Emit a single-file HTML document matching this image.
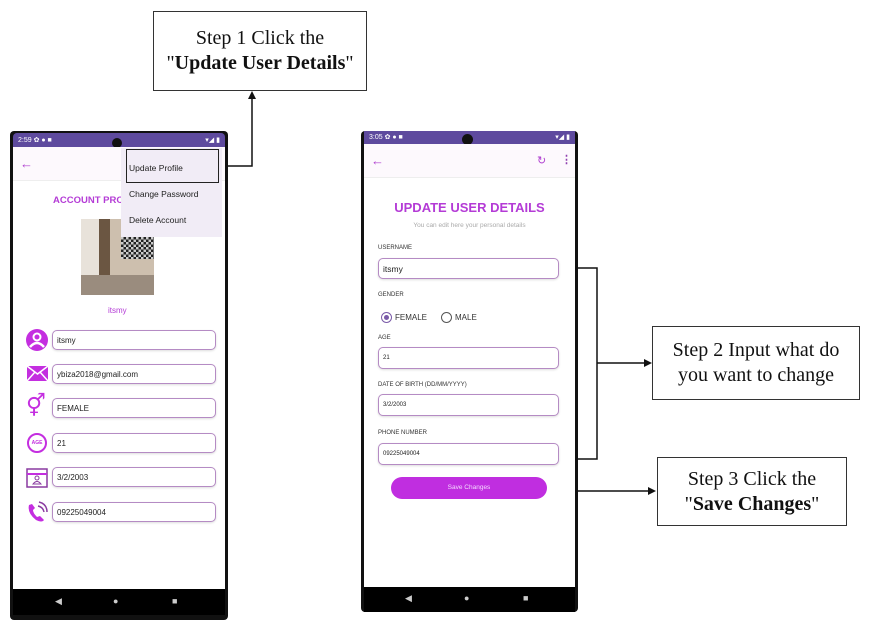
<!DOCTYPE html><html><head><style>
*{margin:0;padding:0;box-sizing:border-box}
body{width:872px;height:631px;background:#fff;position:relative;overflow:hidden;font-family:"Liberation Sans",sans-serif}
.a{position:absolute}
.box{position:absolute;border:1.5px solid #333;background:#fff;font-family:"Liberation Serif",serif;font-size:20px;text-align:center;line-height:25px;color:#111;display:flex;flex-direction:column;justify-content:center}
.inp{position:absolute;border:1px solid #b58bc4;border-radius:5px;background:#fff;font-size:8px;color:#222;padding-left:4px;display:flex;align-items:center;box-shadow:0 1px 2px #ddd}
.lbl{position:absolute;font-size:6px;color:#333}
.ic{position:absolute;color:#c42ee0}
</style></head><body>
<div class="box" style="left:153px;top:11px;width:214px;height:80px">Step 1 Click the<br><span>"<b>Update User Details</b>"</span></div>
<div class="box" style="left:652px;top:326px;width:208px;height:74px">Step 2 Input what do<br>you want to change</div>
<div class="box" style="left:657px;top:457px;width:190px;height:69px">Step 3 Click the<br><span>"<b>Save Changes</b>"</span></div>
<svg class="a" style="left:0;top:0" width="872" height="631">
<g stroke="#111" stroke-width="1.5" fill="none">
<path d="M220 166H252V96"/>
<path d="M559 268H597V459H559"/>
<path d="M597 363H645"/>
<path d="M549 491H648"/>
</g>
<g fill="#111"><path d="M252 91l-4 8h8z"/><path d="M652 363l-8-4v8z"/><path d="M656 491l-8-4v8z"/></g>
</svg>
<div class="a" style="left:10px;top:131px;width:218px;height:489px;background:#111;border-radius:4px"></div>
<div class="a" style="left:13px;top:133px;width:212px;height:14px;background:#5e4a9e;border-radius:4px 4px 0 0;color:#fff;font-size:7px;padding:3px 5px">2:59 ✿ ● ■<span style="float:right">▾◢ ▮</span></div>
<div class="a" style="left:112px;top:138px;width:10px;height:10px;border-radius:50%;background:#111"></div>
<div class="a" style="left:13px;top:147px;width:212px;height:442px;background:#fff"></div>
<div class="a" style="left:13px;top:147px;width:212px;height:34px;background:#fdf9fd;border-bottom:1px solid #eee"></div>
<div class="a" style="left:20px;top:156px;color:#b040d0;font-size:13px">←</div>
<div class="a" style="left:53px;top:195px;color:#b43bd6;font-size:9.5px;font-weight:bold">ACCOUNT PROF</div>
<div class="a" style="left:81px;top:219px;width:73px;height:76px;background:linear-gradient(90deg,#e8e2da 0 25%,#6b5642 25% 40%,#cdbfae 40%);"></div>
<div class="a" style="left:121px;top:237px;width:33px;height:22px;background:repeating-conic-gradient(#222 0 25%,#ccc 0 50%) 0 0/5px 5px"></div>
<div class="a" style="left:81px;top:275px;width:73px;height:20px;background:#9a8c7e"></div>
<div class="a" style="left:121px;top:148px;width:101px;height:89px;background:#f1ecf6"></div>
<div class="a" style="left:126px;top:149px;width:93px;height:34px;border:1.5px solid #222"></div>
<div class="a" style="left:129px;top:163px;font-size:8.5px;color:#222">Update Profile</div>
<div class="a" style="left:129px;top:189px;font-size:8.5px;color:#222">Change Password</div>
<div class="a" style="left:129px;top:215px;font-size:8.5px;color:#222">Delete Account</div>
<div class="a" style="left:108px;top:306px;font-size:8px;color:#b43bd6">itsmy</div>
<div class="inp" style="left:52px;top:330px;width:164px;height:20px">itsmy</div>
<div class="inp" style="left:52px;top:364px;width:164px;height:20px">ybiza2018@gmail.com</div>
<div class="inp" style="left:52px;top:398px;width:164px;height:20px">FEMALE</div>
<div class="inp" style="left:52px;top:433px;width:164px;height:20px">21</div>
<div class="inp" style="left:52px;top:467px;width:164px;height:20px">3/2/2003</div>
<div class="inp" style="left:52px;top:502px;width:164px;height:20px">09225049004</div>
<svg class="a" style="left:26px;top:329px" width="22" height="22"><circle cx="11" cy="11" r="11" fill="#c42ee0"/><circle cx="11" cy="8" r="3.5" fill="none" stroke="#fff" stroke-width="2"/><path d="M4 18Q11 10 18 18" fill="none" stroke="#fff" stroke-width="2.5"/></svg>
<div class="a" style="left:27px;top:366px;width:21px;height:15px;background:#c42ee0"></div>
<svg class="a" style="left:27px;top:366px" width="21" height="15"><path d="M0 0L10.5 8L21 0M0 15L8 6M21 15L13 6" stroke="#fff" stroke-width="1.5" fill="none"/></svg>
<div class="ic" style="left:26px;top:393px;font-size:22px">⚥</div>
<div class="a" style="left:27px;top:433px;width:20px;height:20px;border-radius:50%;border:2px solid #c42ee0;font-size:5px;color:#c42ee0;font-weight:bold;text-align:center;line-height:16px">AGE</div>
<svg class="a" style="left:26px;top:466px" width="22" height="22"><rect x="1" y="3" width="20" height="18" fill="none" stroke="#8a3aa0" stroke-width="1.5"/><path d="M1 8H21" stroke="#c42ee0" stroke-width="2"/><circle cx="11" cy="12" r="2" fill="none" stroke="#8a3aa0"/><path d="M7 18Q11 13 15 18Z" fill="none" stroke="#8a3aa0"/></svg>
<svg class="a" style="left:26px;top:501px" width="22" height="22"><path d="M3 4Q1 12 10 19Q16 22 18 19L14 15L11 16Q7 12 7 9L9 7L6 3Z" fill="#c42ee0"/><path d="M12 5Q17 6 18 11M13 1Q21 3 21 11" fill="none" stroke="#8a3aa0" stroke-width="1.5"/></svg>
<div class="a" style="left:13px;top:589px;width:212px;height:26px;background:#000;color:#ccc;font-size:9px"><span class="a" style="left:42px;top:7px">◀</span><span class="a" style="left:100px;top:7px">●</span><span class="a" style="left:159px;top:7px">■</span></div>
<div class="a" style="left:361px;top:131px;width:217px;height:481px;background:#111;border-radius:4px"></div>
<div class="a" style="left:364px;top:131px;width:211px;height:13px;background:#5e4a9e;color:#fff;font-size:7px;padding:2px 5px">3:05 ✿ ● ■<span style="float:right">▾◢ ▮</span></div>
<div class="a" style="left:462px;top:134px;width:11px;height:11px;border-radius:50%;background:#111"></div>
<div class="a" style="left:364px;top:144px;width:211px;height:443px;background:#fff"></div>
<div class="a" style="left:364px;top:144px;width:211px;height:34px;background:#fdf9fd;border-bottom:1px solid #eee"></div>
<div class="a" style="left:371px;top:153px;color:#b040d0;font-size:13px">←</div>
<div class="a" style="left:537px;top:154px;color:#b040d0;font-size:11px">↻</div>
<div class="a" style="left:561px;top:153px;color:#9040b0;font-size:11px;font-weight:bold">⋮</div>
<div class="a" style="left:364px;top:200px;width:211px;text-align:center;color:#b43bd6;font-size:13px;font-weight:bold">UPDATE USER DETAILS</div>
<div class="a" style="left:364px;top:222px;width:211px;text-align:center;color:#aaa;font-size:6.5px">You can edit here your personal details</div>
<div class="lbl" style="left:378px;top:245px">USERNAME</div>
<div class="inp" style="left:378px;top:258px;width:181px;height:21px;font-size:8.5px">itsmy</div>
<div class="lbl" style="left:378px;top:292px">GENDER</div>
<div class="a" style="left:381px;top:312px;width:11px;height:11px;border-radius:50%;border:1.5px solid #7a5aa8"></div>
<div class="a" style="left:384px;top:315px;width:5px;height:5px;border-radius:50%;background:#7a5aa8"></div>
<div class="a" style="left:395px;top:313px;font-size:8px;color:#333">FEMALE</div>
<div class="a" style="left:441px;top:312px;width:11px;height:11px;border-radius:50%;border:1.5px solid #555"></div>
<div class="a" style="left:455px;top:313px;font-size:8px;color:#333">MALE</div>
<div class="lbl" style="left:378px;top:335px">AGE</div>
<div class="inp" style="left:378px;top:347px;width:181px;height:22px;font-size:6px">21</div>
<div class="lbl" style="left:378px;top:382px">DATE OF BIRTH (DD/MM/YYYY)</div>
<div class="inp" style="left:378px;top:394px;width:181px;height:22px;font-size:6px">3/2/2003</div>
<div class="lbl" style="left:378px;top:430px">PHONE NUMBER</div>
<div class="inp" style="left:378px;top:443px;width:181px;height:22px;font-size:6px">09225049004</div>
<div class="a" style="left:391px;top:477px;width:156px;height:22px;border-radius:11px;background:#c02ee0;color:#f4d8ff;font-size:6.5px;text-align:center;line-height:22px">Save Changes</div>
<div class="a" style="left:364px;top:587px;width:211px;height:25px;background:#000;color:#ccc;font-size:9px"><span class="a" style="left:41px;top:6px">◀</span><span class="a" style="left:100px;top:6px">●</span><span class="a" style="left:159px;top:6px">■</span></div>
</body></html>
